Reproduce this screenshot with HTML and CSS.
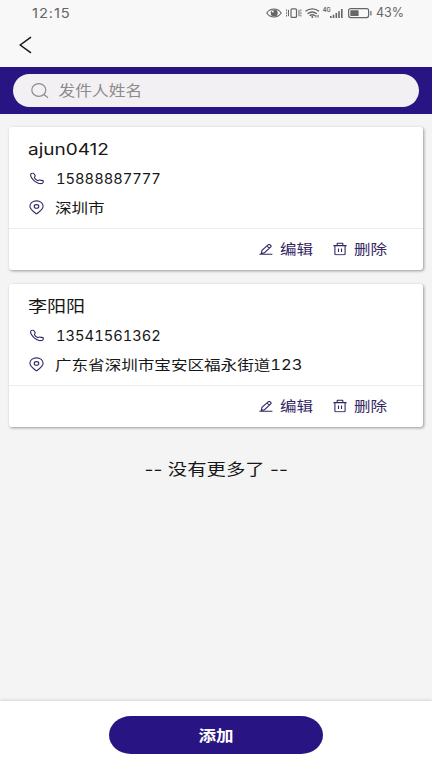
FILE: index.html
```html
<!DOCTYPE html>
<html lang="zh-CN">
<head>
<meta charset="utf-8">
<title>发件人</title>
<link rel="stylesheet" href="styles.css">
</head>
<body>
<svg width="0" height="0" class="defs" aria-hidden="true">
  <symbol id="phone" viewBox="0 0 14 12"><path d="M1.200 1.100C2.200.4 3.400.5 4 1.300L5.100 3c.5.9-.9 1.500-.6 2.200C5 6.400 6.300 7.500 7.600 8.100c.8.3 1.500-1 2.500-.5l2.700.5c.7.300.7 1.700-.2 2.500-1.300 1.200-5.400.3-8-1.900C2.300 6.500.6 4.200.6 2.500c0-.6.2-1.100.6-1.400z"/></symbol>
  <symbol id="pin" viewBox="0 0 15 15"><path d="M7.500 13.900C4.200 11.500.9 9.300.9 6.200.9 3.200 3.800.9 7.500.9s6.600 2.300 6.600 5.300c0 3.100-3.300 5.300-6.600 7.700z"/><ellipse cx="7.500" cy="6.400" rx="2.300" ry="1.800"/></symbol>
  <symbol id="pen" viewBox="0 0 14 12"><path d="M.4 10.800h13M2.300 9.900l.7-3L9.400 1.200c.5-.4 1-.4 1.500 0l.9.8c.5.4.5.9 0 1.300L5.500 9.200l-3.200.7zM8 2.600l2.400 2"/></symbol>
  <symbol id="bin" viewBox="0 0 14 13"><path d="M.4 3.100h13.200M4.200 3V1.100c0-.3.200-.5.500-.5h4.600c.3 0 .5.200.5.500V3M1.900 3.200v8.300c0 .5.300.8.8.8h8.600c.5 0 .8-.3.8-.8V3.200M5.500 5.900v3.500M8.500 5.900v3.500"/></symbol>
</svg>
<header class="status">
  <span class="clock">12:15</span>
  <div class="indicators">
    <svg class="ind-icons" width="106" height="14" viewBox="0 0 106 14">
      <g fill="none" stroke="#666" stroke-width="1.200">
        <path d="M.8 7C2.500 4.300 5 3 8 3s5.500 1.300 7.200 4C13.500 9.700 11 11 8 11S2.500 9.700.8 7z"/>
        <rect x="25" y="2.800" width="5.500" height="8.600" rx="1"/>
        <path d="M22.500 3.800v6.400M33 3.800v6.400M20.600 3.500v1.700M20.600 6.200v1.700M20.600 8.800v1.700M34.900 3.500v1.700M34.900 6.200v1.700M34.900 8.800v1.700" stroke-width="1"/>
        <path d="M39.500 5.300c4-3.300 9.500-3.300 13.500 0M41.500 7.700c3-2.200 6.500-2.200 9.300 0M43.600 9.700c1.700-1.200 3.700-1.200 5.300 0" stroke-width="1.400"/>
        <rect x="82.600" y="2.600" width="20" height="9" rx="2"/>
      </g>
      <g fill="#666">
        <circle cx="8.200" cy="7" r="3.500"/><circle cx="6.800" cy="5.600" r="1" fill="#f8f8f8"/>
        <circle cx="46.300" cy="11" r="1"/><path d="M49.300 11.500V9h1.100v2.500zM51.500 9h1.100v2.500h-1.100z"/>
        <path d="M64 10h1.600v2H64zM66.700 8.700h1.600V12h-1.600zM69.500 7h1.600v5h-1.600zM72.200 5.200h1.600V12h-1.600zM75 3h1.600v9H75z"/>
        <rect x="84.300" y="4.200" width="8.300" height="5.800" rx=".5"/>
        <rect x="104.300" y="5" width="1.200" height="4.500" rx=".5"/>
        <text x="56.800" y="5.800" class="net">4G</text>
      </g>
    </svg>
    <span class="percent">43%</span>
  </div>
</header>
<nav class="nav">
  <svg width="14" height="18" viewBox="0 0 14 18"><path d="M12 1.200L1.200 9 12 16.800" fill="none" stroke="#161616" stroke-width="1.500"/></svg>
</nav>
<div class="search-bar">
  <div class="search">
    <svg width="18" height="16" viewBox="0 0 18 16" fill="none" stroke="#8d8b8e" stroke-width="1.200"><ellipse cx="7.800" cy="7" rx="7" ry="6.300"/><path d="M12.900 11.500l4.100 3.200"/></svg>
    <span class="placeholder">发件人姓名</span>
  </div>
</div>
<main class="list">
  <article class="card">
    <div class="info">
      <h2 class="name latin">ajun0412</h2>
      <div class="row"><svg class="phone"><use href="#phone"/></svg><span class="number">15888887777</span></div>
      <div class="row"><svg class="pin"><use href="#pin"/></svg><span class="address">深圳市</span></div>
    </div>
    <div class="actions">
      <a class="action"><svg class="pen"><use href="#pen"/></svg><span>编辑</span></a>
      <a class="action"><svg class="bin"><use href="#bin"/></svg><span>删除</span></a>
    </div>
  </article>
  <article class="card">
    <div class="info">
      <h2 class="name">李阳阳</h2>
      <div class="row"><svg class="phone"><use href="#phone"/></svg><span class="number">13541561362</span></div>
      <div class="row"><svg class="pin"><use href="#pin"/></svg><span class="address">广东省深圳市宝安区福永街道123</span></div>
    </div>
    <div class="actions">
      <a class="action"><svg class="pen"><use href="#pen"/></svg><span>编辑</span></a>
      <a class="action"><svg class="bin"><use href="#bin"/></svg><span>删除</span></a>
    </div>
  </article>
  <p class="end">-- 没有更多了 --</p>
</main>
<footer class="footer"><button class="add"><span>添加</span></button></footer>
</body>
</html>
```

FILE: styles.css
```css
* { box-sizing: border-box; }
body {
  margin: 0;
  width: 432px;
  height: 768px;
  overflow: hidden;
  display: flex;
  flex-direction: column;
  background: #f4f4f5;
  color: #171717;
  font-family: Inter, "Noto Sans CJK SC", sans-serif;
}
.defs { position: absolute; }
svg { display: block; flex: none; }
span, .name, .end { white-space: nowrap; }

.status {
  height: 25px;
  padding: 0 29px 0 32px;
  display: flex;
  align-items: center;
  justify-content: space-between;
  background: #f8f8f8;
  color: #666;
  font-size: 12.5px;
}
.clock {
  font-size: 13px;
  letter-spacing: .8px;
  transform: translateY(-.5px) scaleX(1.13);
  transform-origin: left;
}
.indicators { display: flex; align-items: center; gap: 4px; }
.percent { width: 27px; font-size: 12.5px; }
.net { font: bold 5.5px Inter, sans-serif; }

.nav {
  height: 42px;
  padding: 11px 0 0 19px;
  background: #f8f8f8;
}

.search-bar {
  height: 47px;
  padding: 7px 13px;
  background: #281482;
}
.search {
  height: 33px;
  padding-left: 18px;
  border-radius: 17px;
  background: #f2f0f2;
  display: flex;
  align-items: center;
  gap: 10px;
}
.placeholder {
  color: #8d8b8e;
  font-size: 14.3px;
  transform: translate(-.5px, -1px) scaleX(1.17);
  transform-origin: left;
}

.list {
  flex: 1;
  padding: 13px 9px 0;
}
.card {
  height: 143px;
  margin-bottom: 14px;
  width: 414px;
  border-radius: 3px;
  background: #fff;
  box-shadow: 1px 1px 3px rgba(0, 0, 0, .38);
}
.info {
  height: 102px;
  padding: 8px 19px 0;
  border-bottom: 1px solid #ededed;
}
.name {
  margin: 0;
  width: max-content;
  height: 29px;
  line-height: 28px;
  font-size: 16px;
  font-weight: 400;
  transform: scaleX(1.19);
  transform-origin: left;
}
.latin { font-size: 16.5px; line-height: 29px; transform: scaleX(1.15); }
.row {
  height: 29px;
  display: flex;
  align-items: center;
}
.row svg, .action svg {
  fill: none;
  stroke: #342762;
  stroke-width: 1.1;
}
.row .phone { transform: translateY(-.5px); }
.phone { width: 14px; height: 12px; margin: 0 11.5px 0 2px; }
.pin { width: 15px; height: 15px; margin: 0 11px 0 1px; }
.number, .address {
  font-size: 14px;
  font-variant-numeric: tabular-nums;
  transform: scaleX(1.05);
  transform-origin: left;
}
.address { transform: translateY(-1px) scaleX(1.183); }

.actions {
  height: 41px;
  padding-right: 35px;
  display: flex;
  align-items: center;
  justify-content: flex-end;
  gap: 19px;
}
.action {
  display: flex;
  align-items: center;
  gap: 7px;
  color: #342762;
  font-size: 14px;
}
.action svg { transform: translateY(-.5px); }
.action span {
  width: 34px;
  transform: translateY(-2px) scaleX(1.18);
  transform-origin: left;
}
.pen { width: 14px; height: 12px; }
.bin { width: 14px; height: 13px; }

.end {
  width: max-content;
  margin: 30px auto 0;
  line-height: 25px;
  font-size: 16px;
  transform: scaleX(1.21);
}

.footer {
  height: 67px;
  padding-top: 15px;
  background: #fff;
  box-shadow: 0 -1px 3px rgba(0, 0, 0, .12);
  display: flex;
  justify-content: center;
}
.add {
  width: 214px;
  height: 38px;
  padding: 0;
  border: 0;
  border-radius: 22px / 19px;
  background: #281482;
  color: #fff;
  font: 700 15px Inter, "Noto Sans CJK SC", sans-serif;
}
.add span {
  display: inline-block;
  transform: translateY(-1px) scaleX(1.17);
}
```
